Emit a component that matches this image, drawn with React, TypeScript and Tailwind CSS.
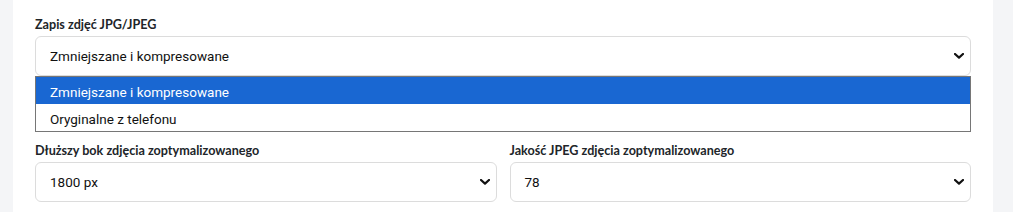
import React from 'react';

const LABEL_FONT = { fontFamily: '"Segoe UI", Lato, "Noto Sans", sans-serif' };
const FIELD_FONT = { fontFamily: '"Segoe UI", Roboto, "Liberation Sans", sans-serif' };

function Chevron() {
  return (
    <svg width="10" height="6" viewBox="0 0 10 6" className="absolute right-[6px] top-1/2 -translate-y-1/2 pointer-events-none">
      <polyline points="1,1 5,4.6 9,1" fill="none" stroke="#111" strokeWidth="2.2" strokeLinecap="round" strokeLinejoin="round" />
    </svg>
  );
}

function FakeSelect({ value }: { value: string }) {
  return (
    <div className="relative h-[40px] rounded-md border border-[#dcdcdc] bg-white flex items-center pl-[14px] text-[13.5px] text-[#111]" style={FIELD_FONT}>
      <span>{value}</span>
      <Chevron />
    </div>
  );
}

function Label({ children }: { children: React.ReactNode }) {
  return (
    <label className="block text-[12.6px] font-bold text-[#212529] leading-[17px]" style={LABEL_FONT}>
      {children}
    </label>
  );
}

export default function App() {
  const options = ['Zmniejszane i kompresowane', 'Oryginalne z telefonu'];
  return (
    <div className="min-h-screen bg-[#f4f5f7] pl-[13px] pr-[20px]">
      <div className="bg-white px-[22px] pt-[16px] pb-[12px] min-h-[212px]">
        <Label>Zapis zdjęć JPG/JPEG</Label>
        <div className="relative mt-[3px]">
          <FakeSelect value="Zmniejszane i kompresowane" />
          {/* open native list */}
          <div className="absolute left-0 right-0 top-full border border-[#767676] bg-white text-[13.5px] text-[#111] z-10" style={FIELD_FONT}>
            {options.map((o, i) => (
              <div
                key={o}
                className={i === 0 ? 'h-[27px] flex items-center pl-[14px] pt-[3px] bg-[#1967d2] text-white' : 'h-[27px] flex items-center pl-[14px] pt-[3px]'}
              >
                {o}
              </div>
            ))}
          </div>
        </div>
        <div className="grid grid-cols-2 gap-x-[13px] mt-[66px]">
          <div>
            <Label>Dłuższy bok zdjęcia zoptymalizowanego</Label>
            <div className="mt-[3px]">
              <FakeSelect value="1800 px" />
            </div>
          </div>
          <div>
            <Label>Jakość JPEG zdjęcia zoptymalizowanego</Label>
            <div className="mt-[3px]">
              <FakeSelect value="78" />
            </div>
          </div>
        </div>
      </div>
    </div>
  );
}
